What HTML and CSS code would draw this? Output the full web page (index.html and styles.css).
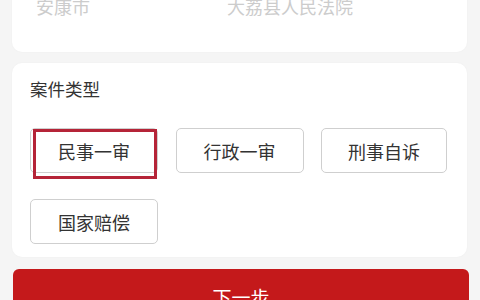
FILE: index.html
```html
<!DOCTYPE html>
<html lang="zh">
<head>
<meta charset="utf-8">
<link rel="stylesheet" href="styles.css">
</head>
<body>
<div class="page">
  <div class="card card-top">
    <div class="loc-row">
      <span class="loc-city">安康市</span>
      <span class="loc-court">大荔县人民法院</span>
    </div>
  </div>
  <div class="card card-type">
    <div class="label">案件类型</div>
    <div class="options">
      <div class="opt opt-marked">民事一审<span class="mark"></span></div>
      <div class="opt">行政一审</div>
      <div class="opt">刑事自诉</div>
      <div class="opt">国家赔偿</div>
    </div>
  </div>
  <div class="next-btn">下一步</div>
</div>
</body>
</html>
```
FILE: styles.css
```css
html, body {
  margin: 0;
  padding: 0;
  background: #f5f5f5;
  font-family: "Noto Sans CJK SC", "Noto Sans", sans-serif;
  overflow: hidden;
}
.page {
  width: 480px;
  height: 300px;
  display: flex;
  flex-direction: column;
  overflow: hidden;
}
.card {
  background: #ffffff;
  border-radius: 10px;
  margin: 0 13px 0 12px;
  box-sizing: border-box;
  box-shadow: 0 0 2px rgba(0,0,0,0.04);
}
.card-top {
  height: 90px;
  margin-top: -38px;
  flex-shrink: 0;
  display: flex;
  flex-direction: column;
  justify-content: flex-end;
  padding: 0 0 34px 24px;
}
.loc-row {
  display: flex;
  font-size: 18px;
  line-height: 24px;
  color: #cccccc;
}
.loc-city {
  width: 191px;
}
.card-type {
  margin-top: 11px;
  height: 194px;
  flex-shrink: 0;
  padding: 14px 18px 0 18px;
}
.label {
  font-size: 17.5px;
  line-height: 24px;
  color: #333333;
}
.options {
  margin-top: 27px;
  display: grid;
  grid-template-columns: 128px 128px 126px;
  column-gap: 17.5px;
  row-gap: 26px;
}
.opt {
  position: relative;
  height: 45px;
  box-sizing: border-box;
  border: 1px solid #cfcfcf;
  border-radius: 5px;
  display: flex;
  align-items: center;
  justify-content: center;
  font-size: 18px;
  color: #333333;
}
.mark {
  position: absolute;
  left: 2px;
  top: 0px;
  width: 124px;
  height: 50px;
  box-sizing: border-box;
  border: 3px solid #b52438;
}
.next-btn {
  margin: 12px 11px 0 13px;
  height: 50px;
  flex-shrink: 0;
  background: #c4191b;
  border-radius: 6px;
  color: #ffffff;
  font-size: 19px;
  display: flex;
  justify-content: center;
  padding-top: 16px;
  box-sizing: border-box;
  line-height: 24px;
}
```
